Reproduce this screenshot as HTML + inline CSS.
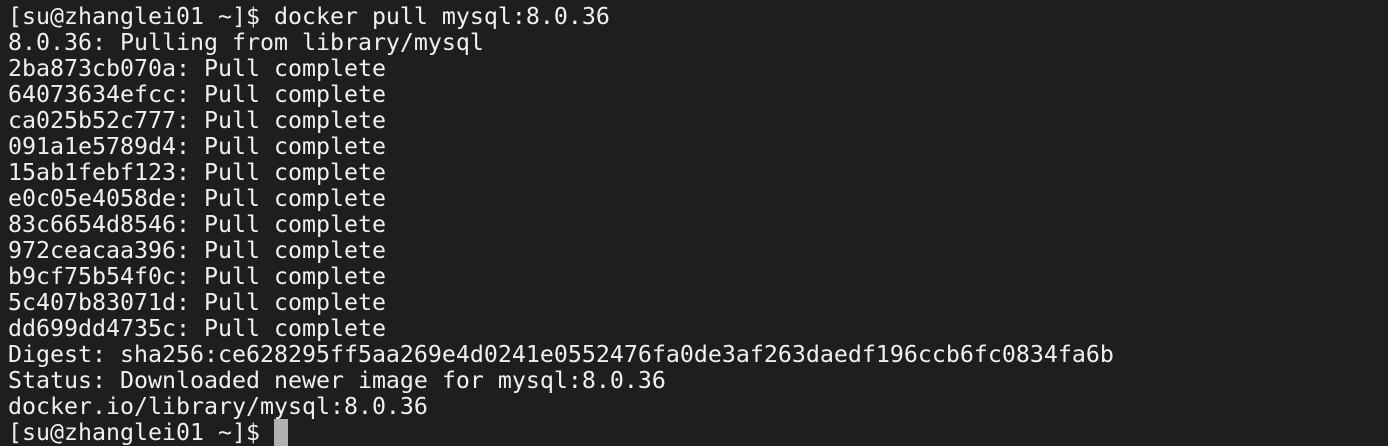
<!DOCTYPE html>
<html><head><style>
html,body{margin:0;padding:0;}
body{width:1388px;height:425px;overflow:hidden;background:#1e1e1e;}
pre{margin:0;position:absolute;left:8px;top:4px;font-family:"DejaVu Sans Mono","Liberation Mono",monospace;font-size:23.25px;line-height:26px;color:#f0f0f0;}
.c{background:#b0b0b0;color:#b0b0b0;}
</style></head><body><pre>[su@zhanglei01 ~]$ docker pull mysql:8.0.36
8.0.36: Pulling from library/mysql
2ba873cb070a: Pull complete
64073634efcc: Pull complete
ca025b52c777: Pull complete
091a1e5789d4: Pull complete
15ab1febf123: Pull complete
e0c05e4058de: Pull complete
83c6654d8546: Pull complete
972ceacaa396: Pull complete
b9cf75b54f0c: Pull complete
5c407b83071d: Pull complete
dd699dd4735c: Pull complete
Digest: sha256:ce628295ff5aa269e4d0241e0552476fa0de3af263daedf196ccb6fc0834fa6b
Status: Downloaded newer image for mysql:8.0.36
docker.io/library/mysql:8.0.36
[su@zhanglei01 ~]$ <span class="c">&nbsp;</span></pre></body></html>
